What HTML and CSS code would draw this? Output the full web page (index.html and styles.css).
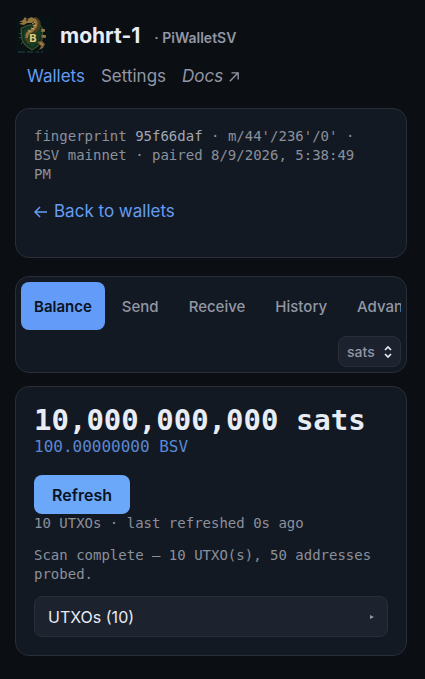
FILE: index.html
```html
<!DOCTYPE html>
<html lang="en">
<head>
    <meta charset="UTF-8">
    <meta name="viewport" content="width=device-width, initial-scale=1.0">
    <title>mohrt-1 · PiWalletSV</title>
    <link rel="stylesheet" href="styles.css">
</head>
<body>
    <header class="site-header">
        <div class="brand">
            <svg class="logo" viewBox="0 0 36 36" aria-hidden="true">
                <rect width="36" height="36" fill="#081215"/>
                <!-- shield -->
                <path d="M6 11 L14 8 L25 8 L28 12 L27 23 Q25 29 17 33 Q9 29 7 23 Z" fill="#14301e" stroke="#4d5a30" stroke-width="1"/>
                <path d="M9 13 L15 11 L25 11 L26 14 L25 22 Q22 27 17 30 Q11 27 9 22 Z" fill="#153c25"/>
                <path d="M7 16 L4 17 M7 20 L4 21 M8 25 L6 27" stroke="#2c5734" stroke-width="1"/>
                <!-- dragon -->
                <path d="M19 2 Q24 4 23 9 Q22 13 17 15 Q12 17 13 22 L15 26" fill="none" stroke="#4d3d20" stroke-width="5"/>
                <path d="M18 2 Q22 4 21 8 Q20 12 16 14 Q11 16 12 21" fill="none" stroke="#94743d" stroke-width="3"/>
                <path d="M4 5 L8 3 L10 0 L12 2 L17 0 L20 3 L17 6 L12 6 L9 8 L4 7 L8 5 Z" fill="#94743d"/>
                <path d="M20 5 L17 7 M21 8 L18 9 M19 12 L16 11 M16 15 L13 13" stroke="#c9a765" stroke-width="1"/>
                <circle cx="12" cy="3" r="1" fill="#17231a"/>
                <!-- claws and tail -->
                <path d="M26 12 H30 V15 H26 Z M26 18 H31 V21 H27 Z M22 25 L27 24 L30 27 L28 31 L24 33 L26 29 Z" fill="#7d6037"/>
                <path d="M27 13 H29 M28 19 H30 M25 26 L28 28" stroke="#bd985b" stroke-width="1"/>
                <circle cx="18" cy="21" r="5" fill="#203d22"/>
                <text class="logo-letter" x="18" y="25" text-anchor="middle">B</text>
                <path d="M3 35 H10 M12 35 H18 M21 35 H24 M26 35 H28" stroke="#2b4246" stroke-width="1"/>
            </svg>
            <h1 class="wallet-name">mohrt-1</h1>
            <span class="app-name">· PiWalletSV</span>
        </div>
        <nav class="site-nav">
            <a class="active" href="#wallets">Wallets</a>
            <a href="#settings">Settings</a>
            <a class="external" href="#docs"><em>Docs</em>
                <svg class="arrow" viewBox="0 0 12 12" aria-hidden="true"><path d="M1 11 L11 1 M3 1 H11 V9"/></svg>
            </a>
        </nav>
    </header>

    <main>
        <section class="card wallet-card">
            <p class="mono wallet-meta">fingerprint <span class="fingerprint">95f66daf</span> · m/44'/236'/0' · BSV mainnet · paired 8/9/2026, 5:38:49 PM</p>
            <a class="back-link" href="#wallets">
                <svg class="back-arrow" viewBox="0 0 14 12" aria-hidden="true"><path d="M6 1 L1 6 L6 11 M1 6 H13"/></svg>
                Back to wallets
            </a>
        </section>

        <section class="card toolbar">
            <div class="tabs">
                <button class="tab selected" type="button">Balance</button>
                <button class="tab" type="button">Send</button>
                <button class="tab" type="button">Receive</button>
                <button class="tab" type="button">History</button>
                <button class="tab" type="button">Advanced</button>
            </div>
            <div class="unit-picker">
                <select class="unit-select" aria-label="Display unit">
                    <option>sats</option>
                    <option>BSV</option>
                </select>
                <svg class="unit-chevrons" viewBox="0 0 8 12" aria-hidden="true"><path d="M1 4 L4 1 L7 4 M1 8 L4 11 L7 8"/></svg>
            </div>
        </section>

        <section class="card balance-card">
            <div class="balance">10,000,000,000 sats</div>
            <div class="balance-alt">100.00000000 BSV</div>
            <button class="refresh-button" type="button">Refresh</button>
            <p class="mono">10 UTXOs · last refreshed 0s ago</p>
            <p class="mono scan-status">Scan complete — 10 UTXO(s), 50 addresses probed.</p>
            <details class="utxos">
                <summary>UTXOs (10)
                    <svg class="marker" viewBox="0 0 4 4" aria-hidden="true"><path d="M0 0 L4 2 L0 4 Z"/></svg>
                </summary>
            </details>
        </section>
    </main>
</body>
</html>
```
FILE: styles.css
```css
* {
    box-sizing: border-box;
}
body {
    margin: 0;
    padding: 15px 18px 23px 15px;
    background-color: #0b0e13;
    color: #e8ecf5;
    font-family: Inter, "Liberation Sans", sans-serif;
    font-size: 16px;
}
h1, p {
    margin: 0;
}
a {
    color: #9297a4;
    text-decoration: none;
}
svg {
    flex: none;
    fill: none;
}
.brand {
    display: flex;
    align-items: center;
    height: 40px;
}
.logo {
    width: 36px;
    height: 36px;
}
.logo-letter {
    font-size: 11px;
    font-weight: 700;
    fill: #ecca7b;
}
.wallet-name {
    margin: 0 14px 0 9px;
    font-size: 21px;
    font-weight: 700;
}
.app-name {
    padding-top: 4px;
    color: #9297a4;
    font-size: 14px;
    font-weight: 600;
}
.site-nav {
    display: flex;
    gap: 16px;
    padding: 9px 12px 19px;
    font-size: 17px;
    line-height: 25px;
}
.site-nav .active {
    color: #659df6;
}
.external {
    display: flex;
    align-items: center;
    gap: 6px;
}
.arrow {
    width: 10px;
    height: 10px;
    stroke: #9297a4;
    stroke-width: 1.6;
}
.card {
    border: 1px solid #292e39;
    border-radius: 14px;
    background-color: #131922;
    padding: 18px;
}
.mono {
    color: #8b909c;
    font-family: "DejaVu Sans Mono", monospace;
    font-size: 14px;
    line-height: 19px;
}
.wallet-meta {
    padding-right: 12px;
}
.fingerprint {
    color: #a2a7b3;
}
.wallet-card {
    margin-bottom: 18px;
    padding-bottom: 33px;
}
.back-link {
    display: flex;
    align-items: center;
    gap: 6px;
    margin-top: 15px;
    color: #659df6;
    font-size: 17px;
    line-height: 25px;
}
.back-arrow {
    width: 14px;
    height: 12px;
    stroke: #659df6;
    stroke-width: 1.5;
}
.toolbar {
    display: flex;
    flex-direction: column;
    gap: 6px;
    margin-bottom: 13px;
    padding: 5px;
}
.tabs {
    display: flex;
    gap: 4px;
    overflow: hidden;
}
.tab {
    flex: none;
    height: 48px;
    padding: 0 13px;
    border: none;
    border-radius: 8px;
    background: none;
    color: #9297a4;
    font: 500 15px Inter, "Liberation Sans", sans-serif;
    cursor: pointer;
}
.tab.selected {
    background-color: #639cf8;
    color: #0b1220;
    font-weight: 600;
}
.unit-picker {
    position: relative;
    align-self: flex-end;
}
.unit-select {
    display: block;
    width: 63px;
    height: 31px;
    padding: 0 8px;
    border: 1px solid #292e39;
    border-radius: 8px;
    background-color: #1c222e;
    color: #9297a4;
    font: 500 14px Inter, "Liberation Sans", sans-serif;
    appearance: none;
}
.unit-chevrons {
    position: absolute;
    top: 10px;
    right: 9px;
    width: 8px;
    height: 12px;
    stroke: #e8ecf5;
    stroke-width: 1.7;
    pointer-events: none;
}
.balance {
    font-family: "DejaVu Sans Mono", monospace;
    font-size: 29px;
    font-weight: 700;
    line-height: 30px;
    white-space: nowrap;
}
.balance-alt {
    margin-bottom: 16px;
    color: #5b87d2;
    font-family: "DejaVu Sans Mono", monospace;
    font-size: 16px;
    line-height: 24px;
}
.refresh-button {
    display: block;
    height: 39px;
    padding: 0 18px;
    border: none;
    border-radius: 8px;
    background-color: #6ca8fa;
    color: #0b1220;
    font: 600 16px Inter, "Liberation Sans", sans-serif;
    cursor: pointer;
}
.scan-status {
    margin: 13px 0 12px;
}
.utxos {
    border: 1px solid #292e39;
    border-radius: 8px;
    background-color: #1c222e;
}
.utxos summary {
    display: flex;
    align-items: center;
    justify-content: space-between;
    height: 39px;
    padding: 0 13px;
    font-size: 16px;
    cursor: pointer;
}
.marker {
    width: 4px;
    height: 4px;
    fill: #9297a4;
}
```
